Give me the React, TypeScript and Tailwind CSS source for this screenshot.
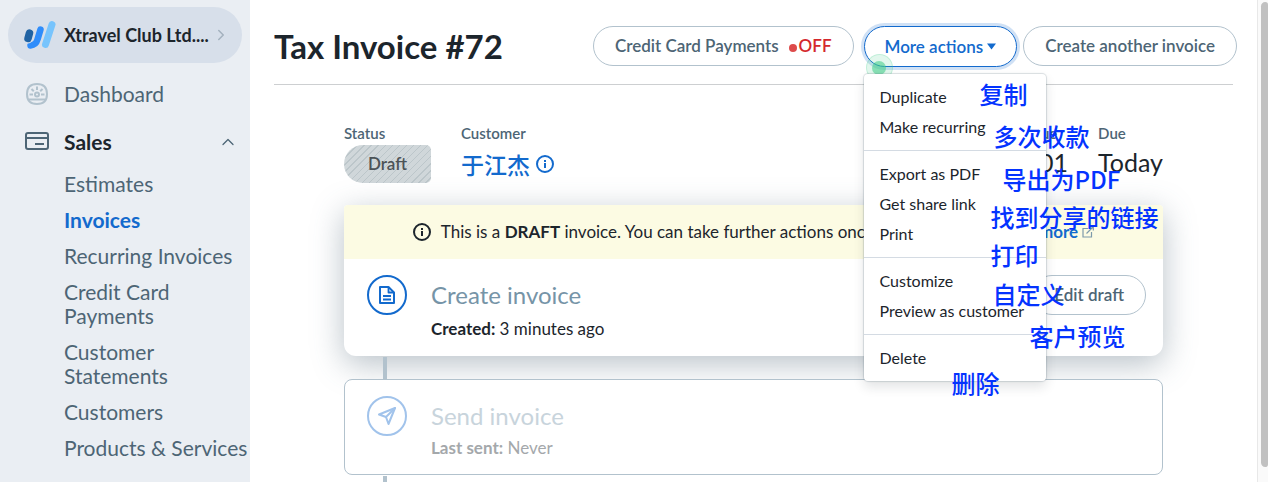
import React, { useState } from 'react';
import { ChevronRight, ChevronUp } from 'lucide-react';

interface MenuItem {
  label: string;
  note: string;
  notePos: string;
}

const menuGroups: MenuItem[][] = [
  [
    { label: 'Duplicate', note: '复制', notePos: 'left-[116px] top-0' },
    { label: 'Make recurring', note: '多次收款', notePos: 'left-[130px] top-3' },
  ],
  [
    { label: 'Export as PDF', note: '导出为PDF', notePos: 'left-[139px] top-2' },
    { label: 'Get share link', note: '找到分享的链接', notePos: 'left-[127px] top-4' },
    { label: 'Print', note: '打印', notePos: 'left-[127px] top-6' },
  ],
  [
    { label: 'Customize', note: '自定义', notePos: 'left-[129px] top-4' },
    { label: 'Preview as customer', note: '客户预览', notePos: 'left-[166px] top-7' },
  ],
  [{ label: 'Delete', note: '删除', notePos: 'left-[88px] top-7' }],
];

const salesLinks = [
  'Estimates',
  'Invoices',
  'Recurring Invoices',
  'Credit Card Payments',
  'Customer Statements',
  'Customers',
  'Products & Services',
];

const Logo = () => (
  <svg width="34" height="30" viewBox="0 0 34 30" fill="none" strokeLinecap="round">
    <path d="M30 4.5 23.5 24.5" stroke="#77c4fd" strokeWidth="7" />
    <path d="M18.5 9.500 15.500 19.500Q14 25 8.500 25.500" stroke="#2f8dfb" strokeWidth="6.500" />
    <path d="M7.500 13 6 18.500" stroke="#d7dfea" strokeWidth="10" />
    <path d="M7.500 13 6 18.500" stroke="#2063a4" strokeWidth="7.500" />
  </svg>
);

const GaugeIcon = () => (
  <svg width="24" height="24" viewBox="0 0 24 24" fill="none" stroke="#b2c2cd" strokeWidth="2">
    <path d="M12 2C5.5 2 2 5.5 2 12s3.5 10 10 10 10-3.5 10-10S18.5 2 12 2Z" />
    <circle cx="12" cy="12.5" r="2" />
    <path d="M4 17.5h16M12 4.5v3.5M4.5 12.5H8M16 12.5h3.5M6.5 7l2.3 2.3M17.5 7l-2.3 2.3" />
  </svg>
);

const CardIcon = () => (
  <svg width="24" height="20" viewBox="0 0 24 20" fill="none" stroke="#4d6575" strokeWidth="2">
    <rect x="1" y="1" width="22" height="16" rx="2" />
    <path d="M1 6h22" />
    <path d="M10 12h9" />
  </svg>
);

const InfoIcon = () => (
  <svg width="18" height="18" viewBox="0 0 18 18" fill="none" stroke="currentColor" strokeWidth="2">
    <circle cx="9" cy="9" r="8" />
    <path d="M9 8v5M9 5v2" />
  </svg>
);

const DocIcon = () => (
  <svg width="16" height="18" viewBox="0 0 16 18" fill="none" stroke="currentColor" strokeWidth="2" strokeLinejoin="round">
    <path d="M1 1h8.5L15 6.5V17H1Z" />
    <path d="M9.5 1v5.5H15M4 10h8M4 13.5h8" strokeWidth="1.8" />
  </svg>
);

const PlaneIcon = () => (
  <svg width="20" height="20" viewBox="0 0 20 20" fill="none" stroke="currentColor" strokeWidth="2" strokeLinejoin="round" strokeLinecap="round">
    <path d="M18 2 2 8.5 9 11l2.5 7Z" />
    <path d="M18 2 9 11" />
  </svg>
);

const ExternalIcon = () => (
  <svg width="12" height="12" viewBox="0 0 12 12" fill="none" stroke="#7d9aab" strokeWidth="1.2">
    <path d="M6 2.5H1v8.5h8.5V6M4.5 7.5l6.5-6.500M7.5.7h3.8v3.8" />
  </svg>
);

const pill = 'h-10 shrink-0 whitespace-nowrap rounded-full border border-[#b2c2cd] bg-white px-[21px] font-semibold text-[#4d6575]';

const Sidebar = () => (
  <aside className="w-[250px] shrink-0 bg-[#eaeef3] pt-[7px] text-[21px] leading-6 text-[#4d6575]">
    <button className="mx-2 flex h-14 w-[234px] items-center rounded-full bg-[#d7dfea] pl-[14px] pr-3 text-[18px] font-bold text-[#1c252c]">
      <Logo />
      <span className="ml-2 flex-1 whitespace-nowrap text-left">Xtravel Club Ltd....</span>
      <ChevronRight size={18} color="#a3b1be" strokeWidth={2} />
    </button>
    <nav>
      <a href="#dashboard" className="mt-[19px] flex items-center pl-[25px]">
        <GaugeIcon />
        <span className="ml-[15px]">Dashboard</span>
      </a>
      <button className="mt-6 flex w-full items-center pl-[25px] pr-3 font-bold text-[#1c252c]">
        <CardIcon />
        <span className="ml-[15px] flex-1 text-left">Sales</span>
        <ChevronUp size={20} color="#4d6575" strokeWidth={1.5} />
      </button>
      <ul className="mt-3 pl-16">
        {salesLinks.map((item) => (
          <li key={item} className="py-[6px]">
            <a href="#sales" className={item === 'Invoices' ? 'font-bold text-[#136acd]' : ''}>
              {item}
            </a>
          </li>
        ))}
      </ul>
    </nav>
  </aside>
);

const ActionsMenu = () => {
  const [open, setOpen] = useState(true);

  return (
    <div className="relative z-10 ml-[10px] mr-[6px]">
      <button
        aria-expanded={open}
        onClick={() => setOpen(!open)}
        className="flex h-[41px] items-center gap-1 whitespace-nowrap rounded-full border border-[#136acd] bg-white px-5 font-semibold text-[#136acd] ring-3 ring-[#136acd]/20"
      >
        More actions
        <svg width="9" height="7" viewBox="0 0 9 7" fill="currentColor">
          <path d="M0 .5h9L4.5 6.500Z" />
        </svg>
      </button>
      <span className="absolute left-[2px] top-7 flex size-[27px] items-center justify-center rounded-full border border-[#3dcc85]/20 bg-[#3dcc85]/15">
        <span className="size-[14px] rounded-full bg-[#3dcc85]/55" />
      </span>
      {open && (
        <div className="absolute left-0 top-full mt-[7px] w-[182px] divide-y divide-[#d4dbe3] rounded bg-white text-[16px] leading-[30px] text-[#1c252c] shadow-[0_0_1px_1px_rgba(77,101,117,0.2),0_6px_12px_rgba(28,37,44,0.12)]">
          {menuGroups.map((group) => (
            <ul key={group[0].label} className="py-2">
              {group.map(({ label, note, notePos }) => (
                <li key={label} className="relative">
                  <button className="w-full whitespace-nowrap pl-4 text-left">{label}</button>
                  <span className={`pointer-events-none absolute z-10 whitespace-nowrap font-['Noto_Sans_CJK_SC',sans-serif] text-[24px] font-medium leading-6 text-[#0433ff] ${notePos}`}>
                    {note}
                  </span>
                </li>
              ))}
            </ul>
          ))}
        </div>
      )}
    </div>
  );
};

const Header = () => (
  <header className="flex items-start justify-between border-b border-[#cdcfd1] pb-[17px] pt-[26px]">
    <h1 className="whitespace-nowrap text-[33px] font-bold leading-10 text-[#1c252c]">Tax Invoice #72</h1>
    <div className="-mr-1 flex text-[17px]">
      <button className={pill}>
        Credit Card Payments
        <span className="ml-[10px] inline-block size-2 rounded-full bg-[#dd4b4b] align-middle" />
        <span className="ml-[2px] text-[#d4282d]">OFF</span>
      </button>
      <ActionsMenu />
      <button className={pill}>Create another invoice</button>
    </div>
  </header>
);

const Summary = () => (
  <dl className="flex gap-[30px] text-[15px] leading-4 text-[#4d6575]">
    <div>
      <dt className="font-semibold">Status</dt>
      <dd className="mt-1 flex h-[38px] w-[87px] items-center justify-center rounded-l-[19px] rounded-r-[5px] bg-[repeating-linear-gradient(135deg,#d0d7da_0px,#d0d7da_4px,#bcc6ca_4px,#bcc6ca_5px)] text-[17px] font-semibold text-[#4c5357]">
        Draft
      </dd>
    </div>
    <div className="flex-1">
      <dt className="font-semibold">Customer</dt>
      <dd className="mt-1 flex h-[38px] items-center gap-[6px] text-[#136acd]">
        <a href="#customer" className="font-['Noto_Sans_CJK_SC',sans-serif] text-[23px] font-medium">于江杰</a>
        <InfoIcon />
      </dd>
    </div>
    <div>
      <dt className="font-semibold">Amount due</dt>
      <dd className="mt-1 text-[25px] leading-[34px] text-[#1c252c]">$150.01</dd>
    </div>
    <div>
      <dt className="font-semibold">Due</dt>
      <dd className="mt-1 text-[25px] leading-[34px] text-[#1c252c]">Today</dd>
    </div>
  </dl>
);

export default function App() {
  return (
    <div className="flex min-h-screen bg-white font-[Lato,'Noto_Sans_CJK_SC',sans-serif]">
      <Sidebar />
      <main className="flex min-w-0 flex-1 flex-col px-6">
        <Header />
        <div className="mx-auto flex w-full max-w-[819px] flex-1 flex-col pt-10 text-[17px]">
          <Summary />
          <section className="mt-[22px] rounded-b-xl rounded-t bg-white shadow-[0_8px_32px_rgba(77,101,117,0.4)]">
            <div className="flex h-[54px] items-center justify-center whitespace-nowrap rounded-t bg-[#fcfbe3] text-[#1c252c]">
              <InfoIcon />
              <p className="ml-[10px]">
                This is a <b>DRAFT</b> invoice. You can take further actions once you approve it.{' '}
                <a href="#learn" className="font-bold text-[#136acd]">Learn more</a>
              </p>
              <span className="ml-1"><ExternalIcon /></span>
            </div>
            <div className="flex items-start pb-[15px] pl-[23px] pr-[17px] pt-4">
              <span className="flex size-10 items-center justify-center rounded-full border-2 border-[#136acd] text-[#136acd]">
                <DocIcon />
              </span>
              <div className="ml-6 flex-1">
                <h2 className="text-[24px] leading-10 text-[#7694a7]">Create invoice</h2>
                <p className="mt-[2px] leading-6 text-[#1c252c]"><b>Created:</b> 3 minutes ago</p>
              </div>
              <button className={pill}>Edit draft</button>
            </div>
          </section>
          <div className="ml-[39px] mt-px h-[22px] w-1 bg-[#b2c2cd]" />
          <section className="relative flex items-start rounded-lg border border-[#b2c2cd] bg-white pb-[14px] pl-[22px] pt-4">
            <span className="flex size-10 items-center justify-center rounded-full border-2 border-[#a1c3eb] text-[#a1c3eb]">
              <PlaneIcon />
            </span>
            <div className="ml-6">
              <h2 className="text-[24px] leading-10 text-[#c8d4dc]">Send invoice</h2>
              <p className="leading-6 text-[#a4a8ab]"><b>Last sent:</b> Never</p>
            </div>
          </section>
          <div className="ml-[39px] mt-px w-1 flex-1 bg-[#b2c2cd]" />
        </div>
      </main>
      <div className="w-[11px] shrink-0 border-l border-[#e8e8e8] bg-[#fafafa] pb-[15px] pl-[3px] pt-[2px]">
        <div className="h-full rounded-l-md rounded-r-sm bg-[#c1c1c1]" />
      </div>
    </div>
  );
}
